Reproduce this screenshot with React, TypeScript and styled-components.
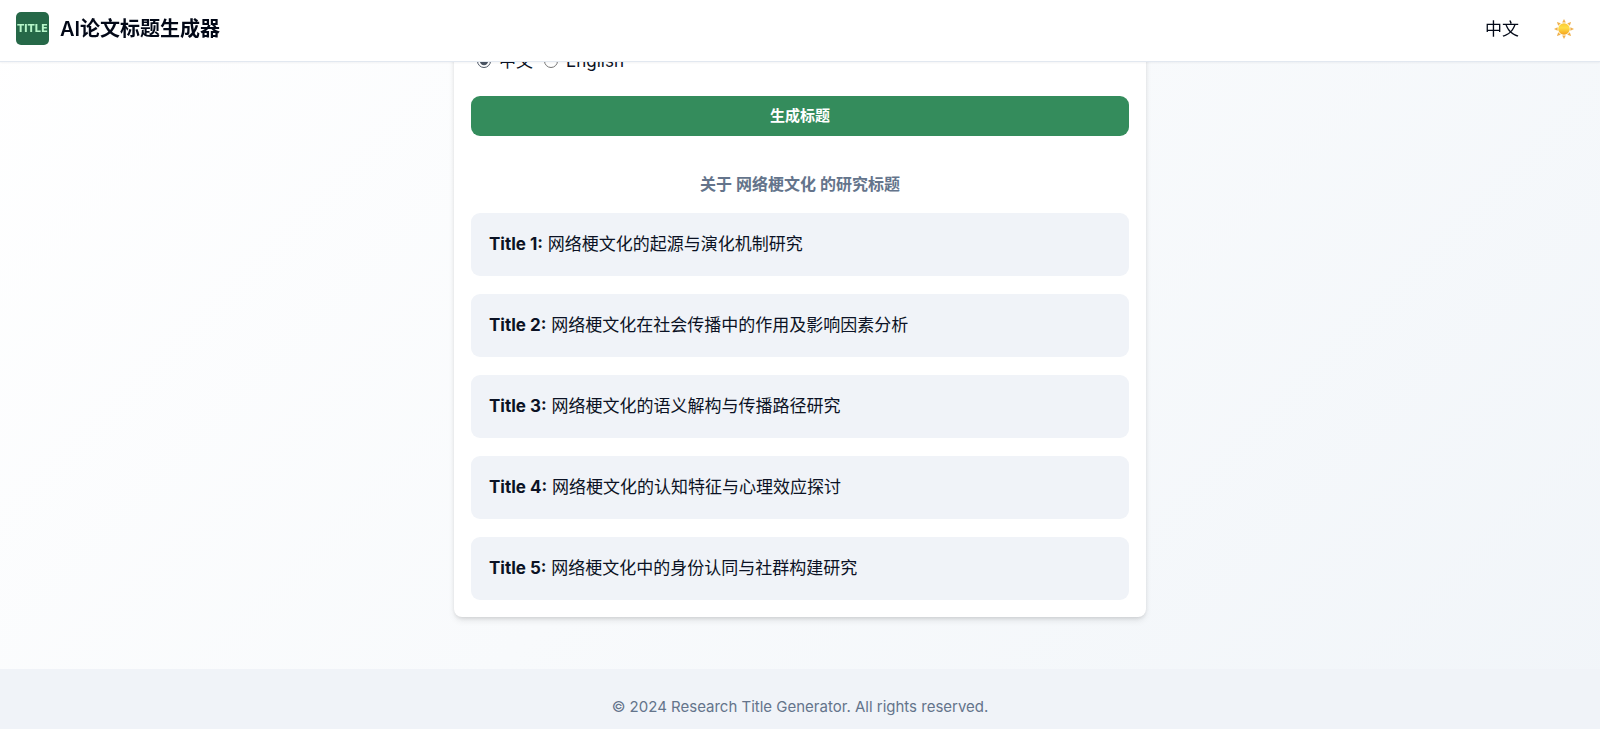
import React from "react";
import styled, { createGlobalStyle } from "styled-components";

const GlobalStyle = createGlobalStyle`
  *, *::before, *::after { box-sizing: border-box; }
  body {
    margin: 0;
    color: #0b1224;
    font-family: Inter, "Noto Sans CJK SC", "Noto Sans", sans-serif;
    font-size: 17px;
    line-height: 26px;
  }
`;

const Page = styled.div`
  display: flex;
  flex-direction: column;
  min-height: 100vh;
  background: linear-gradient(135deg, #ffffff, #f1f5f9);
`;

const Header = styled.header`
  position: fixed;
  inset: 0 0 auto;
  z-index: 10;
  display: flex;
  align-items: center;
  justify-content: space-between;
  padding: 12px 26px 16px 16px;
  background: #ffffff;
  border-bottom: 1px solid #e2e8f0;
  box-shadow: 0 1px 2px rgba(15, 23, 42, 0.05);
`;

const Brand = styled.a`
  display: flex;
  align-items: center;
  gap: 11px;
  color: #020817;
  text-decoration: none;
`;

const BrandName = styled.span`
  font-size: 20px;
  font-weight: 600;
  line-height: 32px;
`;

const Nav = styled.nav`
  display: flex;
  align-items: center;
  gap: 35px;
`;

const NavButton = styled.button`
  display: flex;
  align-items: center;
  padding: 0;
  border: 0;
  background: none;
  color: #020817;
  font: inherit;
  cursor: pointer;
`;

const Main = styled.main`
  display: flex;
  flex: 1;
  justify-content: center;
  padding-bottom: 52px;
`;

const Card = styled.section`
  width: 100%;
  max-width: 692px;
  padding: 48px 17px 17px;
  background: #ffffff;
  border-radius: 8px;
  box-shadow: 0 4px 7px -1px rgba(0, 0, 0, 0.1), 0 2px 4px -2px rgba(0, 0, 0, 0.1),
    0 1px 4px rgba(0, 0, 0, 0.04);
`;

const LanguageChoice = styled.div`
  display: flex;
  gap: 11px;
  padding-left: 6px;
`;

const RadioLabel = styled.label`
  display: flex;
  align-items: center;
  gap: 8px;
`;

const Radio = styled.input`
  width: 14px;
  height: 14px;
  margin: 0;
  accent-color: #4b5563;
`;

const GenerateButton = styled.button`
  display: block;
  width: 100%;
  height: 40px;
  margin-top: 22px;
  border: 0;
  border-radius: 9px;
  background: #348c5c;
  color: #ffffff;
  font: inherit;
  font-size: 15px;
  font-weight: 600;
  cursor: pointer;
`;

const ResultHeading = styled.h2`
  margin: 35px 0 16px;
  color: #64748b;
  font-size: 16px;
  font-weight: 600;
  line-height: 26px;
  text-align: center;
`;

const TitleList = styled.ul`
  display: grid;
  gap: 18px;
  margin: 0;
  padding: 0;
  list-style: none;
`;

const TitleItem = styled.li`
  padding: 18px;
  border-radius: 9px;
  background: #f0f3f8;
  line-height: 27px;
`;

const Footer = styled.footer`
  padding: 26px 16px 10px;
  background: #f0f3f8;
  color: #64748b;
  font-size: 15px;
  line-height: 24px;
  text-align: center;
`;

const titles = [
  "网络梗文化的起源与演化机制研究",
  "网络梗文化在社会传播中的作用及影响因素分析",
  "网络梗文化的语义解构与传播路径研究",
  "网络梗文化的认知特征与心理效应探讨",
  "网络梗文化中的身份认同与社群构建研究",
];

const Logo = () => (
  <svg width="33" height="33" viewBox="0 0 33 33" aria-hidden="true">
    <rect width="33" height="33" rx="5" fill="#266848" />
    <text
      x="16.5"
      y="20"
      textAnchor="middle"
      fontFamily="DejaVu Sans, sans-serif"
      fontSize="10"
      fontWeight="700"
      fill="#b5f5c8"
    >
      TITLE
    </text>
  </svg>
);

const Sun = () => (
  <svg width="20" height="20" viewBox="0 0 20 20" aria-hidden="true">
    <defs>
      <linearGradient id="sun" x1="0" y1="0" x2="0" y2="1">
        <stop offset="0" stopColor="#fbc931" />
        <stop offset="0.4" stopColor="#ffde45" />
        <stop offset="1" stopColor="#f5a21d" />
      </linearGradient>
    </defs>
    {[0, 45, 90, 135, 180, 225, 270, 315].map((angle) => (
      <path key={angle} d="M8.2 3.6 10 0l1.8 3.6z" fill="#efb04c" transform={`rotate(${angle} 10 10)`} />
    ))}
    <circle cx="10" cy="10" r="5.8" fill="url(#sun)" />
  </svg>
);

export default function App() {
  return (
    <Page>
      <GlobalStyle />
      <Header>
        <Brand href="#">
          <Logo />
          <BrandName>AI论文标题生成器</BrandName>
        </Brand>
        <Nav>
          <NavButton type="button">中文</NavButton>
          <NavButton type="button" aria-label="切换主题">
            <Sun />
          </NavButton>
        </Nav>
      </Header>
      <Main>
        <Card>
          <LanguageChoice role="radiogroup">
            <RadioLabel>
              <Radio type="radio" name="language" defaultChecked />
              中文
            </RadioLabel>
            <RadioLabel>
              <Radio type="radio" name="language" />
              English
            </RadioLabel>
          </LanguageChoice>
          <GenerateButton type="button">生成标题</GenerateButton>
          <ResultHeading>关于 网络梗文化 的研究标题</ResultHeading>
          <TitleList>
            {titles.map((title, index) => (
              <TitleItem key={title}>
                <strong>Title {index + 1}:</strong> {title}
              </TitleItem>
            ))}
          </TitleList>
        </Card>
      </Main>
      <Footer>© 2024 Research Title Generator. All rights reserved.</Footer>
    </Page>
  );
}
